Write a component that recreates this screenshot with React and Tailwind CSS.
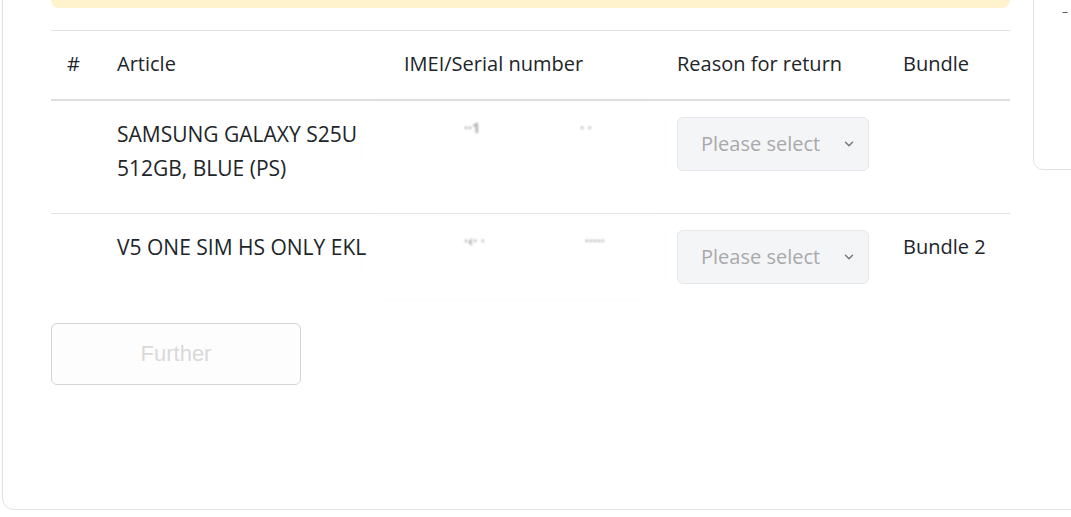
import { ChevronDown } from 'lucide-react';

const rows = [
  { id: 1, article: ['SAMSUNG GALAXY S25U', '512GB, BLUE (PS)'], bundle: '', height: 'h-[114px]', blur: ['··1', '· ·'] },
  { id: 2, article: ['V5 ONE SIM HS ONLY EKL'], bundle: 'Bundle 2', height: 'h-[92px]', blur: ['·‹· ·', '·····'] },
];

function ReasonSelect() {
  return (
    <div className="flex items-center justify-between w-[192px] h-[54px] rounded-[6px] border border-[#e7e8eb] bg-[#f4f5f7] pl-[23px] pr-[12px] text-[20px] text-[#a9a9ab]">
      <span>Please select</span>
      <ChevronDown className="w-[14px] h-[14px] text-[#777]" strokeWidth={2.5} />
    </div>
  );
}

function BlurredSerial({ parts }) {
  return (
    <div className="-ml-[40px] flex w-[300px] h-[82px] items-start gap-[100px] rounded-[24px] bg-white pt-[14px] pl-[100px] shadow-[0_0_18px_rgba(0,0,0,0.012)]">
      {parts.map((p, i) => (
        <span key={i} className="text-[14px] font-bold text-[#a5a5a5] blur-[0.8px]">{p}</span>
      ))}
    </div>
  );
}

export default function App() {
  return (
    <div className="w-[1071px] h-[517px] overflow-hidden bg-white" style={{ fontFamily: '"Open Sans", "Noto Sans", sans-serif' }}>
      <div className="ml-[2px] -mt-[40px] w-[1200px] h-[550px] flex rounded-[12px] border border-[#e3e3e3] pl-[48px]">
        {/* Main column */}
        <div className="w-[959px] shrink-0 flex flex-col">
          <div className="h-[47px] rounded-b-[8px] bg-[#fef3cd]" />

          <table className="mt-[22px] w-[959px] table-fixed border-collapse text-left text-[20px] text-[#212529]">
            <colgroup>
              <col className="w-[50px]" />
              <col className="w-[287px]" />
              <col className="w-[273px]" />
              <col className="w-[226px]" />
              <col className="w-[123px]" />
            </colgroup>
            <thead>
              <tr className="h-[69px] border-t border-b-2 border-t-[#e3e3e3] border-b-[#dedede]">
                <th className="pl-[16px] pb-[1px] font-medium">#</th>
                <th className="pl-[16px] pb-[1px] font-medium">Article</th>
                <th className="pl-[16px] pb-[1px] font-medium">IMEI/Serial number</th>
                <th className="pl-[16px] pb-[1px] font-medium">Reason for return</th>
                <th className="pl-[16px] pb-[1px] font-medium">Bundle</th>
              </tr>
            </thead>
            <tbody>
              {rows.map((r, idx) => (
                <tr key={r.id} className={`${r.height} align-top ${idx === 0 ? 'border-b border-[#e3e3e3]' : ''}`}>
                  <td className="pl-[16px]" />
                  <td className="pl-[16px] pt-[16px] text-[21px] leading-[34px] font-normal whitespace-nowrap">
                    {r.article.map((line) => (
                      <div key={line}>{line}</div>
                    ))}
                  </td>
                  <td className="pl-[16px] pt-[2px]">
                    <BlurredSerial parts={r.blur} />
                  </td>
                  <td className="pl-[16px] pt-[16px]">
                    <ReasonSelect />
                  </td>
                  <td className="pl-[16px] pt-[16px] leading-[34px] whitespace-nowrap">{r.bundle}</td>
                </tr>
              ))}
            </tbody>
          </table>

          <button
            disabled
            className="mt-[17px] w-[250px] h-[62px] rounded-[6px] border border-[#d4d4d4] bg-[#fdfdfd] text-[22px] text-[#d9d9d9]"
            style={{ fontFamily: '"Liberation Sans", Arial, sans-serif' }}
          >
            Further
          </button>
        </div>

        {/* Side panel */}
        <div className="ml-[23px] w-[200px] h-[209px] shrink-0 rounded-[10px] border border-[#e3e3e3] pl-[28px] pt-[36px]">
          <span className="text-[12px] text-[#555]">–</span>
        </div>
      </div>
    </div>
  );
}
